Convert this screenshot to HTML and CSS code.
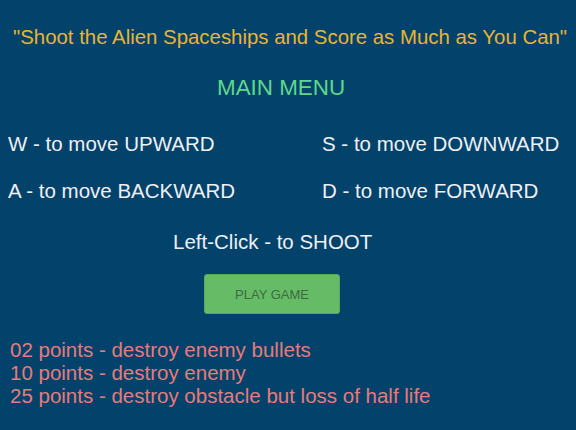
FILE: index.html
```html
<!DOCTYPE html>
<html>
<head>
<meta charset="utf-8">
<link rel="stylesheet" href="styles.css">
</head>
<body>
<div class="screen">
  <h1 class="tagline">"Shoot the Alien Spaceships and Score as Much as You Can"</h1>
  <h2 class="menu-title">MAIN MENU</h2>
  <div class="controls">
    <div class="ctl">W - to move UPWARD</div>
    <div class="ctl">S - to move DOWNWARD</div>
    <div class="ctl">A - to move BACKWARD</div>
    <div class="ctl">D - to move FORWARD</div>
  </div>
  <div class="shoot">Left-Click - to SHOOT</div>
  <div class="btn-row"><button class="play">PLAY GAME</button></div>
  <div class="points">
    <div>02 points - destroy enemy bullets</div>
    <div>10 points - destroy enemy</div>
    <div>25 points - destroy obstacle but loss of half life</div>
  </div>
</div>
</body>
</html>
```
FILE: styles.css
```css
html, body {
  margin: 0;
  padding: 0;
  background: #03426b;
}
body {
  font-family: "Liberation Sans", Arial, sans-serif;
  width: 576px;
  height: 430px;
  overflow: hidden;
}
.screen {
  display: flex;
  flex-direction: column;
}
.tagline {
  margin: 25px 0 0 13px;
  font-size: 20.4px;
  font-weight: normal;
  color: #e9b430;
  line-height: 24px;
  white-space: nowrap;
}
.menu-title {
  margin: 27px 0 0 0;
  padding-left: 217px;
  font-size: 22.4px;
  font-weight: normal;
  color: #5dd98b;
  line-height: 24px;
}
.controls {
  display: grid;
  grid-template-columns: 314px 1fr;
  row-gap: 23px;
  margin: 32px 0 0 8px;
  color: #eef0f2;
  font-size: 20.5px;
  line-height: 24px;
}
.shoot {
  margin: 27px 0 0 173px;
  color: #eef0f2;
  font-size: 20.5px;
  line-height: 24px;
}
.btn-row {
  margin: 20px 0 0 204px;
}
.play {
  width: 136px;
  height: 40px;
  background: #66bb66;
  border: 1px solid #5aa85e;
  border-radius: 3px;
  color: #3e6b42;
  font-family: "Liberation Sans", Arial, sans-serif;
  font-size: 13px;
  padding: 0;
}
.points {
  margin: 24px 0 0 10px;
  color: #e87a7a;
  font-size: 20.5px;
  line-height: 23px;
}
```
